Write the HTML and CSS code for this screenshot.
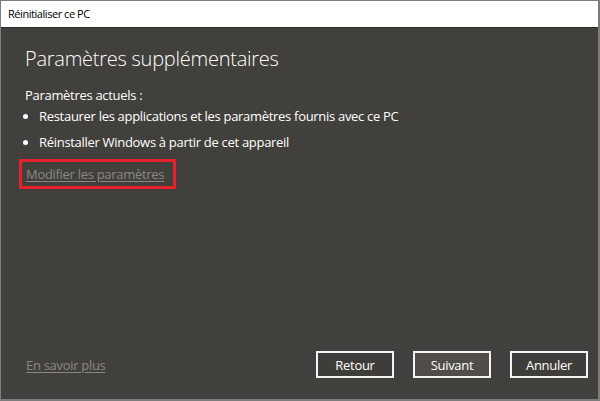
FILE: index.html
```
<!DOCTYPE html>
<html lang="fr">
<head>
<meta charset="utf-8">
<link rel="stylesheet" href="styles.css">
</head>
<body>
<div class="window">
  <div class="titlebar">Réinitialiser ce PC</div>
  <div class="content">
    <h1 class="heading">Paramètres supplémentaires</h1>
    <p class="label">Paramètres actuels :</p>
    <ul class="list">
      <li>Restaurer les applications et les paramètres fournis avec ce PC</li>
      <li>Réinstaller Windows à partir de cet appareil</li>
    </ul>
    <div class="highlight"><a class="link" href="#">Modifier les paramètres</a></div>
    <div class="spacer"></div>
    <div class="footer">
      <a class="link" href="#">En savoir plus</a>
      <div class="buttons">
        <button class="btn">Retour</button>
        <button class="btn primary">Suivant</button>
        <button class="btn">Annuler</button>
      </div>
    </div>
  </div>
</div>
</body>
</html>
```
FILE: styles.css
```
html, body {
  margin: 0;
  padding: 0;
}
body {
  width: 600px;
  height: 401px;
  font-family: "Open Sans", "Noto Sans", sans-serif;
  overflow: hidden;
}
.window {
  width: 600px;
  height: 401px;
  box-sizing: border-box;
  border: 1px solid #7c7c7c;
  border-right-width: 2px;
  border-bottom-width: 2px;
  display: flex;
  flex-direction: column;
  background: #42403c;
}
.titlebar {
  height: 26px;
  background: #ffffff;
  color: #000;
  font-size: 11px;
  line-height: 26px;
  padding-left: 7px;
  border-bottom: 1px solid #2e2d2b;
  letter-spacing: -0.45px;
}
.content {
  flex: 1;
  display: flex;
  flex-direction: column;
  padding: 0 10px 0 24px;
  color: #ffffff;
}
.heading {
  margin: 17px 0 0 0;
  font-size: 20px;
  font-weight: 300;
  line-height: 28px;
  letter-spacing: -0.25px;
}
.label {
  margin: 13px 0 0 0;
  font-size: 13px;
  line-height: 18px;
  letter-spacing: -0.3px;
}
.list {
  margin: 3px 0 0 0;
  padding: 0 0 0 14px;
  font-size: 13px;
  line-height: 18px;
  letter-spacing: -0.3px;
}
.list li {
  margin-bottom: 8px;
}
.highlight {
  align-self: flex-start;
  margin: 0 0 0 -6px;
  border: 3px solid #e8202b;
  padding: 2px 9px 3px 4px;
  line-height: 18px;
}
.link {
  color: #8a8885;
  font-size: 13px;
  letter-spacing: -0.3px;
  text-decoration: underline;
  text-underline-offset: 2px;
}
.spacer {
  flex: 1;
}
.footer {
  display: flex;
  align-items: center;
  justify-content: space-between;
  padding-left: 1px;
  margin-bottom: 21px;
}
.buttons {
  display: flex;
  gap: 19px;
}
.btn {
  width: 78px;
  height: 27px;
  box-sizing: border-box;
  border: 2px solid #f4f4f4;
  background: #3f3d39;
  color: #ffffff;
  font-family: "Open Sans", "Noto Sans", sans-serif;
  font-size: 13px;
  letter-spacing: -0.3px;
  padding: 0;
}
.btn.primary {
  background: #504d49;
}
```
